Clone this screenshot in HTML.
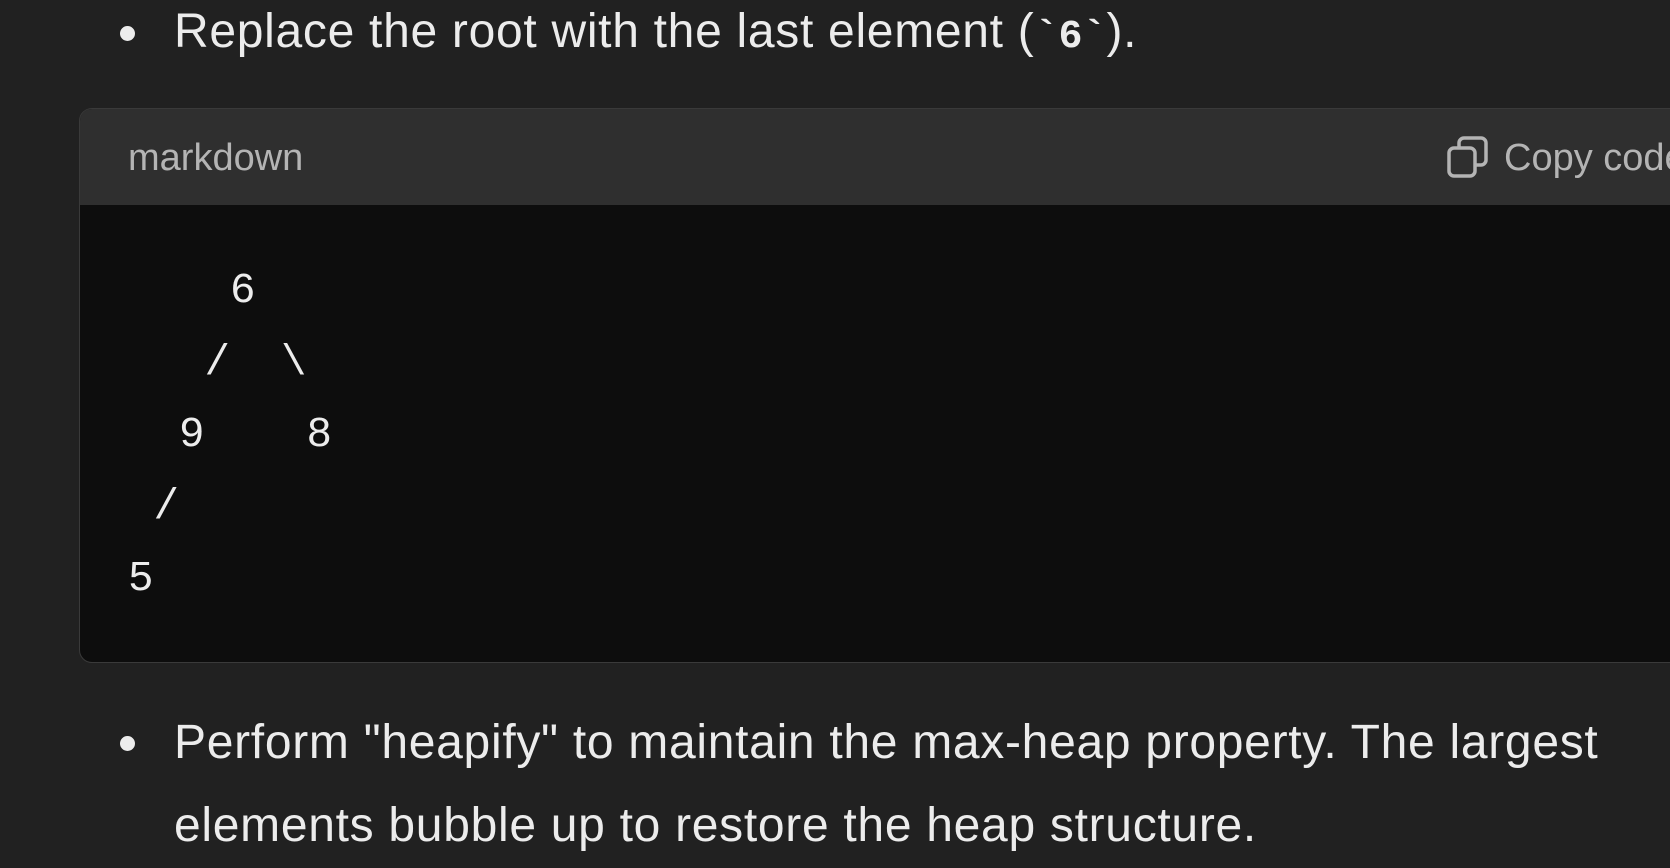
<!DOCTYPE html>
<html><head><meta charset="utf-8"><style>
html,body{margin:0;padding:0;width:1670px;height:868px;overflow:hidden;background:#212121;font-family:"Liberation Sans",sans-serif;color:#ececec}
.t{position:absolute;left:174px;font-size:48px;white-space:nowrap;letter-spacing:0.7px}
.b{position:absolute;left:120px;width:15px;height:15px;border-radius:50%;background:#ececec}
.blk{position:absolute;left:79px;top:108px;width:1620px;height:553px;border-radius:13px;background:#0d0d0d;overflow:hidden;border:1px solid #3a3a3a}
.hd{position:absolute;left:0;top:0;right:0;height:96px;background:#2f2f2f}
.lang{position:absolute;left:48px;top:28px;font-size:38px;color:#b4b4b4}
.cp{position:absolute;left:1411px;top:28px;font-size:38px;color:#b4b4b4;white-space:nowrap}
pre{position:absolute;left:48px;top:146px;margin:0;font-family:"Liberation Mono",monospace;font-size:42.5px;line-height:72px;color:#ececec}
code{font-family:"Liberation Mono",monospace;font-weight:bold;font-size:40px;letter-spacing:0}
</style></head><body>
<div class="b" style="top:26px"></div>
<div class="t" style="top:4px">Replace the root with the last element (<code>`6`</code>).</div>
<div class="blk">
<div class="hd">
<div class="lang">markdown</div>
<svg style="position:absolute;left:1367px;top:27px" width="42" height="42" viewBox="0 0 42 42" fill="none" stroke="#b4b4b4" stroke-width="3.5"><rect x="2" y="12" width="26" height="28" rx="5"/><path d="M12 12V7a5 5 0 0 1 5-5h17a5 5 0 0 1 5 5v17a5 5 0 0 1-5 5h-6"/></svg>
<div class="cp" style="left:1424px">Copy code</div>
</div>
<pre>    6
   /  \
  9    8
 /
5</pre>
</div>
<div class="b" style="top:736px"></div>
<div class="t" style="top:715px">Perform "heapify" to maintain the max-heap property. The largest</div>
<div class="t" style="top:798px">elements bubble up to restore the heap structure.</div>
</body></html>
